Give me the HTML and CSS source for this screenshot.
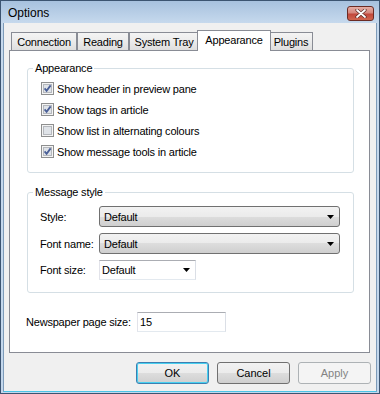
FILE: index.html
```html
<!DOCTYPE html>
<html lang="en">
<head>
    <meta charset="UTF-8">
    <title>Options</title>
    <link rel="stylesheet" href="styles.css">
</head>
<body>
    <div class="window">
        <div class="titlebar">
            <span class="title">Options</span>
            <button class="close-btn" aria-label="Close">
                <svg width="12" height="9" viewBox="0 0 12 9">
                    <path d="M2 1 L10 8 M10 1 L2 8" stroke="#5a2a24" stroke-width="3.2" stroke-linecap="round"/>
                    <path d="M2 1 L10 8 M10 1 L2 8" stroke="#fff" stroke-width="1.8" stroke-linecap="round"/>
                </svg>
            </button>
        </div>
        <div class="client">
            <div class="tabs">
                <div class="tab tab-connection">Connection</div>
                <div class="tab tab-reading">Reading</div>
                <div class="tab tab-tray">System Tray</div>
                <div class="tab tab-appearance active">Appearance</div>
                <div class="tab tab-plugins">Plugins</div>
            </div>
            <div class="panel">
                <fieldset class="group">
                    <legend>Appearance</legend>
                    <div class="check-list">
                        <div class="check-row">
                            <svg class="checkbox" width="13" height="13" viewBox="0 0 13 13">
                                <rect x="0.5" y="0.5" width="12" height="12" fill="#f4f4f4" stroke="#8e8f8f"/>
                                <rect x="2.5" y="2.5" width="8" height="8" fill="#dfe3e8" stroke="#b5b8bd"/>
                                <path d="M3.6 6.4 L5.6 8.8 L9.6 3.4" fill="none" stroke="#4a5f97" stroke-width="1.8"/>
                            </svg>
                            <span>Show header in preview pane</span>
                        </div>
                        <div class="check-row">
                            <svg class="checkbox" width="13" height="13" viewBox="0 0 13 13">
                                <rect x="0.5" y="0.5" width="12" height="12" fill="#f4f4f4" stroke="#8e8f8f"/>
                                <rect x="2.5" y="2.5" width="8" height="8" fill="#dfe3e8" stroke="#b5b8bd"/>
                                <path d="M3.6 6.4 L5.6 8.8 L9.6 3.4" fill="none" stroke="#4a5f97" stroke-width="1.8"/>
                            </svg>
                            <span>Show tags in article</span>
                        </div>
                        <div class="check-row">
                            <svg class="checkbox" width="13" height="13" viewBox="0 0 13 13">
                                <rect x="0.5" y="0.5" width="12" height="12" fill="#f4f4f4" stroke="#8e8f8f"/>
                                <rect x="2.5" y="2.5" width="8" height="8" fill="#dfe3e8" stroke="#b5b8bd"/>
                            </svg>
                            <span>Show list in alternating colours</span>
                        </div>
                        <div class="check-row">
                            <svg class="checkbox" width="13" height="13" viewBox="0 0 13 13">
                                <rect x="0.5" y="0.5" width="12" height="12" fill="#f4f4f4" stroke="#8e8f8f"/>
                                <rect x="2.5" y="2.5" width="8" height="8" fill="#dfe3e8" stroke="#b5b8bd"/>
                                <path d="M3.6 6.4 L5.6 8.8 L9.6 3.4" fill="none" stroke="#4a5f97" stroke-width="1.8"/>
                            </svg>
                            <span>Show message tools in article</span>
                        </div>
                    </div>
                </fieldset>

                <fieldset class="group group-style">
                    <legend>Message style</legend>
                    <div class="style-grid">
                        <label>Style:</label>
                        <div class="combo combo-list">
                            <span>Default</span>
                            <svg width="7" height="4" viewBox="0 0 7 4"><polygon points="0,0 7,0 3.5,4" fill="#000"/></svg>
                        </div>
                        <label>Font name:</label>
                        <div class="combo combo-list">
                            <span>Default</span>
                            <svg width="7" height="4" viewBox="0 0 7 4"><polygon points="0,0 7,0 3.5,4" fill="#000"/></svg>
                        </div>
                        <label>Font size:</label>
                        <div class="combo combo-edit">
                            <span>Default</span>
                            <svg width="7" height="4" viewBox="0 0 7 4"><polygon points="0,0 7,0 3.5,4" fill="#000"/></svg>
                        </div>
                    </div>
                </fieldset>

                <div class="page-size">
                    <label for="pageSize">Newspaper page size:</label>
                    <input type="text" id="pageSize" value="15">
                </div>
            </div>
            <div class="buttons">
                <button class="btn btn-default">OK</button>
                <button class="btn">Cancel</button>
                <button class="btn" disabled>Apply</button>
            </div>
        </div>
    </div>
</body>
</html>
```

FILE: styles.css
```css
* {
    box-sizing: border-box;
}
body {
    margin: 0;
    width: 380px;
    height: 394px;
    overflow: hidden;
    font-family: 'Liberation Sans', Arial, sans-serif;
    font-size: 11px;
    letter-spacing: -0.2px;
    color: #000;
}
.window {
    height: 394px;
    border: 1px solid #3c5471;
    padding: 0 2px 1px 2px;
    background: linear-gradient(#a7c1de, #c6d9ed 22px, #c3d7ec);
    display: flex;
    flex-direction: column;
}
.titlebar {
    height: 22px;
    display: flex;
    align-items: center;
    justify-content: space-between;
    padding: 0 3px 0 5px;
}
.title {
    font-size: 12px;
    letter-spacing: 0;
    margin-top: 1px;
}
.close-btn {
    width: 27px;
    height: 15px;
    margin-top: 2px;
    padding: 0;
    border: 1px solid #6b2b24;
    border-radius: 3px;
    background: linear-gradient(#e5aea6, #d6877c 45%, #c2483b 55%, #d0664f);
    display: flex;
    align-items: center;
    justify-content: center;
}
.client {
    flex: 1;
    background: #f0f0f0;
    border: 1px solid #7d9bb9;
    border-top: none;
    border-bottom-color: #4cc4e6;
}

/* tabs */
.tabs {
    display: flex;
    align-items: flex-end;
    height: 20px;
    margin: 7px 0 0 7px;
}
.tab {
    height: 18px;
    border: 1px solid #898c95;
    border-bottom: none;
    background: linear-gradient(#f4f4f4, #ebebeb 50%, #dedede);
    display: flex;
    align-items: center;
    justify-content: center;
    padding-top: 1px;
}
.tab-connection { width: 66px; }
.tab-reading { width: 52px; }
.tab-tray { width: 70px; }
.tab-appearance { width: 74px; }
.tab-plugins { width: 44px; }
.tab.active {
    position: relative;
    z-index: 1;
    height: 21px;
    margin: 0 -2px -1px -2px;
    background: #fff;
    padding: 0 0 2px;
}

/* panel */
.panel {
    margin: 0 6px 0 5px;
    border: 1px solid #898c95;
    background: #fff;
    padding: 11px 15px 20px 17px;
}
.group {
    margin: 0;
    padding: 0;
    border: 1px solid #d5dfe5;
    border-radius: 3px;
    min-width: 0;
}
.group legend {
    margin-left: 5px;
    padding: 0 2px;
    line-height: 13px;
}
.check-list {
    padding: 3px 0 10px 13px;
}
.check-row {
    height: 21px;
    display: flex;
    align-items: center;
    gap: 3px;
}
.checkbox {
    flex: none;
}
.group-style {
    margin-top: 13px;
}
.style-grid {
    display: grid;
    grid-template-columns: 59px 1fr;
    grid-template-rows: 21px 21px 20px;
    row-gap: 6px;
    align-items: center;
    padding: 7px 13px 12px 12px;
}
.combo {
    height: 100%;
    display: flex;
    align-items: center;
    justify-content: space-between;
}
.combo-list {
    border: 1px solid #707070;
    border-radius: 3px;
    background: linear-gradient(#f2f2f2, #ebebeb 50%, #dddddd 50%, #cfcfcf);
    padding: 0 5px 0 4px;
}
.combo-edit {
    width: 97px;
    border: 1px solid;
    border-color: #abadb3 #dbdfe6 #e3e9ef #e2e3ea;
    background: #fff;
    padding: 0 5px 0 2px;
}
.page-size {
    display: flex;
    align-items: center;
    margin-top: 19px;
    margin-left: -1px;
}
.page-size label {
    flex: none;
    width: 111px;
    white-space: nowrap;
}
.page-size input {
    width: 89px;
    height: 20px;
    border: 1px solid;
    border-color: #abadb3 #dbdfe6 #e3e9ef #e2e3ea;
    padding: 0 2px;
    font-family: inherit;
    font-size: 11px;
}

/* buttons */
.buttons {
    display: flex;
    justify-content: flex-end;
    gap: 8px;
    margin: 9px 5px 0 0;
}
.btn {
    width: 73px;
    height: 22px;
    border: 1px solid #707070;
    border-radius: 3px;
    background: linear-gradient(#f2f2f2, #ebebeb 50%, #dddddd 50%, #cfcfcf);
    font-family: inherit;
    font-size: 11px;
    color: #000;
    padding: 0;
}
.btn-default {
    border-color: #3c7fb1;
    box-shadow: inset 0 0 0 1px #48d0f0;
}
.btn:disabled {
    border-color: #adb2b5;
    background: #f4f4f4;
    color: #838383;
}
```
